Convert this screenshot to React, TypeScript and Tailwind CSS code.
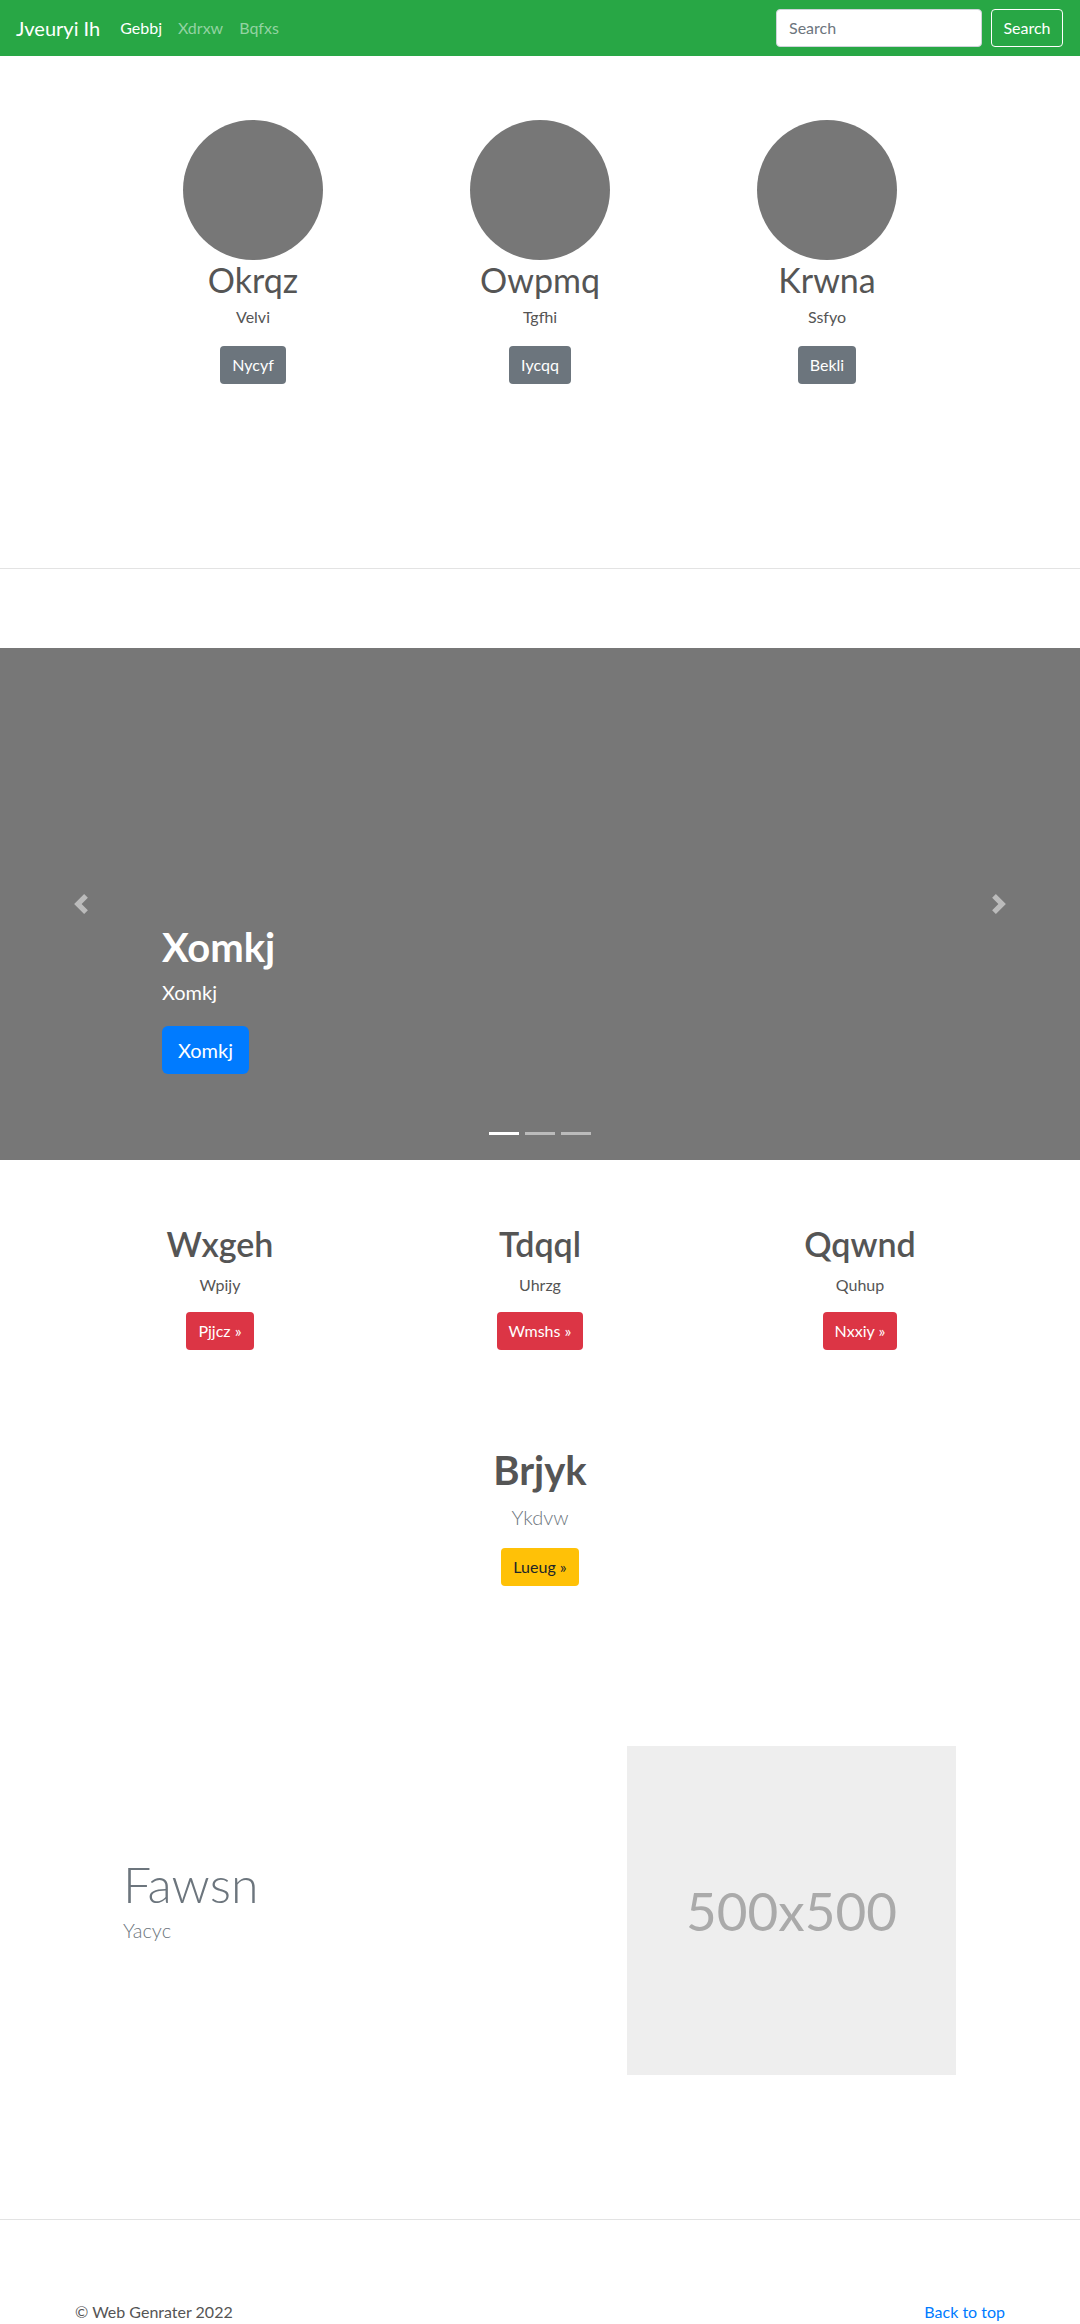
import React from "react";

const font = { fontFamily: "Lato, 'Open Sans', sans-serif" };

function Chevron({ dir }: { dir: "left" | "right" }) {
  return (
    <svg width="20" height="20" viewBox="0 0 8 8" fill="#fff">
      {dir === "left" ? (
        <path d="M5.25 0l-4 4 4 4 1.5-1.5L4.25 4l2.5-2.5L5.25 0z" />
      ) : (
        <path d="M2.75 0l-1.5 1.5L3.75 4l-2.5 2.5L2.75 8l4-4-4-4z" />
      )}
    </svg>
  );
}

export default function App() {
  const people = [
    { n: "Okrqz", s: "Velvi", b: "Nycyf" },
    { n: "Owpmq", s: "Tgfhi", b: "Iycqq" },
    { n: "Krwna", s: "Ssfyo", b: "Bekli" },
  ];
  const feats = [
    { n: "Wxgeh", s: "Wpijy", b: "Pjjcz »" },
    { n: "Tdqql", s: "Uhrzg", b: "Wmshs »" },
    { n: "Qqwnd", s: "Quhup", b: "Nxxiy »" },
  ];
  return (
    <div className="w-[1080px] bg-white" style={font}>
      {/* Navbar */}
      <nav className="h-[56px] bg-[#28a745] flex items-center pl-[16px] pr-[17px]">
        <span className="text-[20px] leading-[30px] text-white mr-[12px]">Jveuryi Ih</span>
        <div className="flex items-center text-[16px] leading-[24px]">
          <span className="px-[8px] text-white">Gebbj</span>
          <span className="px-[8px] text-[#93d3a2]">Xdrxw</span>
          <span className="px-[8px] text-[#93d3a2]">Bqfxs</span>
        </div>
        <div className="ml-auto flex items-center">
          <div className="w-[206px] h-[38px] bg-white rounded-[4px] border border-[#ced4da] flex items-center px-[12px] text-[16px] text-[#6c757d] mr-[9px]">
            Search
          </div>
          <div className="w-[72px] h-[38px] rounded-[4px] border border-white flex items-center justify-center text-[16px] text-white">
            Search
          </div>
        </div>
      </nav>

      {/* Circles row */}
      <div className="w-[861px] mx-auto grid grid-cols-3 pt-[64px] text-center">
        {people.map((p) => (
          <div key={p.n} className="flex flex-col items-center">
            <div className="w-[140px] h-[140px] rounded-full bg-[#777777]" />
            <div className="text-[34px] leading-[40px] text-[#555555] font-normal">{p.n}</div>
            <div className="mt-[5px] text-[16px] leading-[24px] text-[#555555]">{p.s}</div>
            <div className="mt-[17px] h-[38px] px-[12px] rounded-[4px] bg-[#6c757d] text-white text-[16px] flex items-center">
              {p.b}
            </div>
          </div>
        ))}
      </div>

      <div className="mt-[184px] border-t border-[#e3e3e3]" />

      {/* Carousel */}
      <div className="relative mt-[79px] h-[512px] bg-[#777777]">
        <div className="absolute left-0 top-0 h-full w-[162px] flex items-center justify-center opacity-50">
          <Chevron dir="left" />
        </div>
        <div className="absolute right-0 top-0 h-full w-[162px] flex items-center justify-center opacity-50">
          <Chevron dir="right" />
        </div>
        <div className="absolute left-[162px] top-[275px] text-white">
          <div className="text-[40px] leading-[48px] font-bold">Xomkj</div>
          <div className="mt-[6px] text-[20px] leading-[30px]">Xomkj</div>
          <div className="mt-[19px] inline-flex h-[48px] items-center px-[16px] rounded-[6px] bg-[#007bff] text-[20px]">
            Xomkj
          </div>
        </div>
        <div className="absolute bottom-[25px] left-0 right-0 flex justify-center gap-[6px]">
          <div className="w-[30px] h-[3px] bg-white" />
          <div className="w-[30px] h-[3px] bg-[#bbbbbb]" />
          <div className="w-[30px] h-[3px] bg-[#bbbbbb]" />
        </div>
      </div>

      {/* Marketing row */}
      <div className="w-[960px] mx-auto grid grid-cols-3 pt-[64px] text-center">
        {feats.map((f) => (
          <div key={f.n} className="flex flex-col items-center">
            <div className="text-[34px] leading-[40px] font-semibold text-[#555555]">{f.n}</div>
            <div className="mt-[9px] text-[16px] leading-[24px] text-[#555555]">{f.s}</div>
            <div className="mt-[15px] h-[38px] px-[12px] rounded-[4px] bg-[#dc3545] text-white text-[16px] flex items-center">
              {f.b}
            </div>
          </div>
        ))}
      </div>

      {/* Centered block */}
      <div className="flex flex-col items-center mt-[96px]">
        <div className="text-[40px] leading-[48px] font-bold text-[#555555]">Brjyk</div>
        <div className="mt-[8px] text-[20px] leading-[30px] font-light text-[#6c757d]">Ykdvw</div>
        <div className="mt-[16px] h-[38px] px-[12px] rounded-[4px] bg-[#ffc107] text-[#212529] text-[16px] flex items-center">
          Lueug »
        </div>
      </div>

      {/* Featurette */}
      <div className="flex mt-[160px]">
        <div className="ml-[123px] w-[504px] pt-[113px]">
          <div className="text-[50px] leading-[50px] font-light text-[#6c757d]">Fawsn</div>
          <div className="mt-[6px] text-[20px] leading-[30px] font-light text-[#6c757d]">Yacyc</div>
        </div>
        <div className="w-[329px] h-[329px] bg-[#eeeeee] flex items-center justify-center text-[53px] text-[#aaaaaa]">
          500x500
        </div>
      </div>

      <div className="mt-[144px] border-t border-[#e3e3e3]" />

      {/* Footer */}
      <footer className="w-[960px] mx-auto px-[15px] pt-[80px] pb-[40px] flex justify-between text-[16px] leading-[24px]">
        <span className="text-[#555555]">© Web Genrater 2022</span>
        <span className="text-[#007bff]">Back to top</span>
      </footer>
    </div>
  );
}
